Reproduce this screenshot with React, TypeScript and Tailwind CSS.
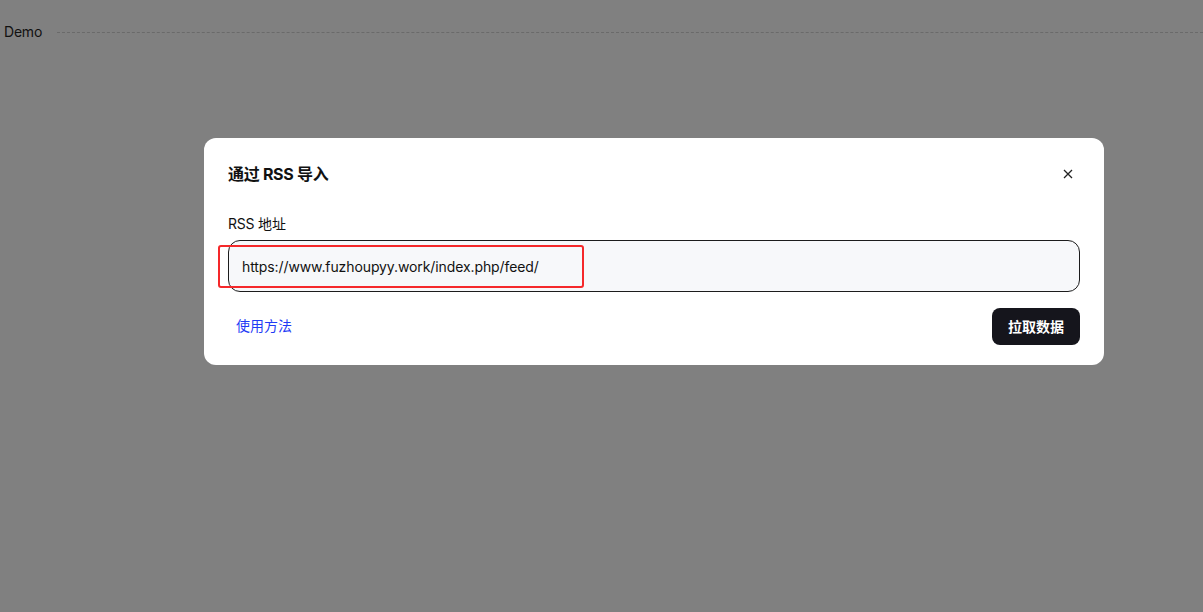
import React from "react";

export default function App() {
  return (
    <div
      className="w-[1203px] h-[612px] bg-[#808080] overflow-hidden"
      style={{ fontFamily: 'Inter, "Noto Sans CJK SC", sans-serif' }}
    >
      <div className="flex items-center h-[18px] mt-[23px] pl-[4px]">
        <span className="text-[14px] leading-[18px] text-[#111] tracking-[-0.2px]">Demo</span>
        <div className="flex-1 ml-[15px] border-t border-dashed border-[#6a6a6a]" />
      </div>

      <div className="ml-[204px] mt-[97px] w-[900px] rounded-[12px] bg-white px-6 pt-6 pb-5">
        <div className="flex items-center justify-between h-[24px]">
          <h2 className="text-[16px] font-bold text-[#111] leading-[24px] tracking-[-0.3px]">通过 RSS 导入</h2>
          <button className="w-[24px] h-[24px] flex items-center justify-center mr-[0px] text-[#222]">
            <svg width="10" height="10" viewBox="0 0 10 10" fill="none" stroke="currentColor" strokeWidth="1.3">
              <path d="M1 1L9 9M9 1L1 9" />
            </svg>
          </button>
        </div>

        <div className="mt-[28px] text-[14px] leading-[20px] text-[#111] tracking-[-0.2px]">RSS 地址</div>

        <div className="relative mt-[6px]">
          <div className="h-[52px] rounded-[12px] border border-[#1c1c1c] bg-[#f7f8fa] flex items-center pl-[13px] text-[14px] text-[#111] tracking-[-0.1px]">
            https://www.fuzhoupyy.work/index.php/feed/
          </div>
          <div className="absolute left-[-10px] top-[5px] w-[366px] h-[43px] border-[2.5px] border-[#f5282a] rounded-[3px]" />
        </div>

        <div className="mt-[16px] flex items-center justify-between">
          <a className="ml-[8px] text-[14px] leading-[20px] mt-[-2px] text-[#1f3bf5] cursor-pointer">使用方法</a>
          <button className="h-[37px] w-[88px] rounded-[8px] bg-[#15151c] text-white text-[14px] font-bold">
            拉取数据
          </button>
        </div>
      </div>
    </div>
  );
}
